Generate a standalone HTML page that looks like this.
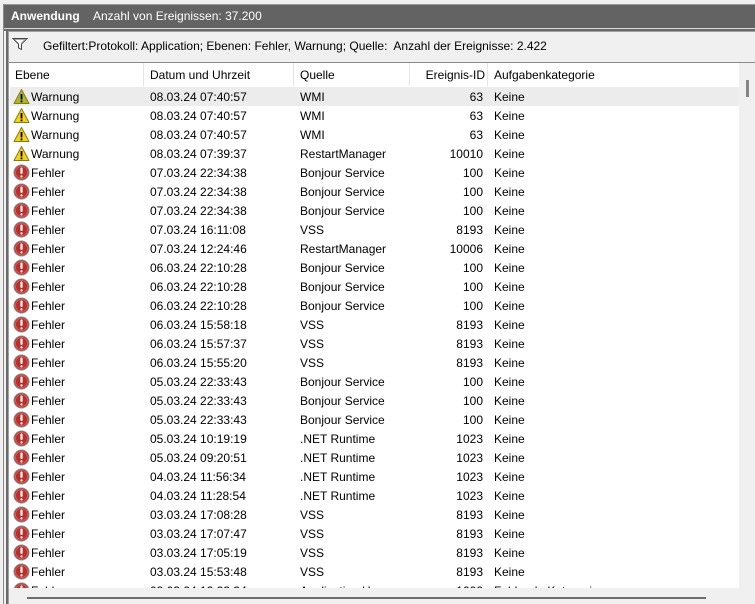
<!DOCTYPE html>
<html><head><meta charset="utf-8"><style>
*{margin:0;padding:0;box-sizing:border-box}
body{width:755px;height:604px;overflow:hidden;background:#f0f0f0;font-family:"Liberation Sans",sans-serif;font-size:12px;color:#000;position:relative}
.abs{position:absolute}
.row{position:absolute;left:10px;width:729px;height:19px;line-height:19px;white-space:nowrap}
.row span{position:absolute;top:1px}
.c1{left:21px}.c2{left:140px}.c3{left:290px}.c4{left:400px;width:73px;text-align:right}.c5{left:484px}
.ic{position:absolute;left:3px;top:1px;width:17px;height:17px}
</style></head><body>
<div class="abs" style="left:3px;top:4px;width:752px;height:1px;background:#9a9a9a"></div>
<div class="abs" style="left:3px;top:4px;width:1px;height:600px;background:#8a8a8a"></div>
<div class="abs" style="left:4px;top:5px;width:751px;height:23px;background:#636363"></div>
<div class="abs" style="left:11px;top:9px;color:#fff;font-weight:bold;font-size:12px">Anwendung</div>
<div class="abs" style="left:93px;top:9px;color:#fff;font-size:12px">Anzahl von Ereignissen: 37.200</div>
<div class="abs" style="left:4px;top:28px;width:751px;height:1px;background:#d8d8d8"></div>
<div class="abs" style="left:4px;top:29px;width:751px;height:2px;background:#6a6a6a"></div>
<div class="abs" style="left:6px;top:29px;width:2px;height:575px;background:#6a6a6a"></div>
<div class="abs" style="left:8px;top:31px;width:747px;height:1px;background:#a0a0a0"></div>
<div class="abs" style="left:8px;top:31px;width:1px;height:573px;background:#a0a0a0"></div>
<svg class="abs" style="left:12px;top:37px" width="16" height="14" viewBox="0 0 16 14"><path d="M1 1.5H15L9.5 7V12.5L6.5 11V7Z" fill="#fff" stroke="#444" stroke-width="1"/><path d="M3 2.5H13L9 6.5" fill="none" stroke="#aaa"/></svg>
<div class="abs" style="left:43px;top:39px;font-size:12px">Gefiltert:Protokoll: Application; Ebenen: Fehler, Warnung; Quelle:&nbsp; Anzahl der Ereignisse: 2.422</div>
<div class="abs" style="left:9px;top:62px;width:746px;height:1px;background:#8a8a8a"></div>
<div class="abs" style="left:9px;top:63px;width:730px;height:525px;background:#fff"></div>
<div class="abs" style="left:739px;top:63px;width:16px;height:525px;background:#f0f0f0"></div>
<div class="abs" style="left:746px;top:80px;width:3px;height:17px;background:#858585"></div>
<div class="abs" style="left:143px;top:63px;width:1px;height:23px;background:#e5e5e5"></div>
<div class="abs" style="left:293px;top:63px;width:1px;height:23px;background:#e5e5e5"></div>
<div class="abs" style="left:409px;top:63px;width:1px;height:23px;background:#e5e5e5"></div>
<div class="abs" style="left:487px;top:63px;width:1px;height:23px;background:#e5e5e5"></div>
<div class="row" style="top:65px"><span style="left:5px">Ebene</span><span class="c2">Datum und Uhrzeit</span><span class="c3">Quelle</span><span class="c4" style="left:402px">Ereignis-ID</span><span class="c5">Aufgabenkategorie</span></div>
<div id="rows" class="abs" style="left:0;top:0;width:755px;height:588px;overflow:hidden"></div>
<div class="abs" style="left:27px;top:597px;width:679px;height:2px;background:#6e6e6e"></div>
<script>
var W='<svg class="ic" viewBox="0 0 17 17"><path d="M8.5 1.5L16 15.5H1Z" fill="#f2d21a" stroke="#8a7a10" stroke-width="1" stroke-linejoin="round"/><rect x="7.6" y="6" width="1.8" height="5.5" fill="#000"/><rect x="7.6" y="12.5" width="1.8" height="1.8" fill="#000"/></svg>';
var W1=W.replace('#f2d21a','#a8b830');
var E='<svg class="ic" viewBox="0 0 17 17"><circle cx="8.5" cy="8.5" r="7.5" fill="#b8302c" stroke="#8a8a8a"/><circle cx="8.5" cy="8.5" r="6" fill="none" stroke="#d86a64" stroke-width="0.8"/><rect x="7.4" y="3.5" width="2.2" height="6.5" rx="1" fill="#fff"/><rect x="7.4" y="11.3" width="2.2" height="2.2" rx="1" fill="#fff"/></svg>';
var d=[["W","08.03.24 07:40:57","WMI","63"],["W","08.03.24 07:40:57","WMI","63"],["W","08.03.24 07:40:57","WMI","63"],["W","08.03.24 07:39:37","RestartManager","10010"],
["E","07.03.24 22:34:38","Bonjour Service","100"],["E","07.03.24 22:34:38","Bonjour Service","100"],["E","07.03.24 22:34:38","Bonjour Service","100"],["E","07.03.24 16:11:08","VSS","8193"],["E","07.03.24 12:24:46","RestartManager","10006"],
["E","06.03.24 22:10:28","Bonjour Service","100"],["E","06.03.24 22:10:28","Bonjour Service","100"],["E","06.03.24 22:10:28","Bonjour Service","100"],["E","06.03.24 15:58:18","VSS","8193"],["E","06.03.24 15:57:37","VSS","8193"],["E","06.03.24 15:55:20","VSS","8193"],
["E","05.03.24 22:33:43","Bonjour Service","100"],["E","05.03.24 22:33:43","Bonjour Service","100"],["E","05.03.24 22:33:43","Bonjour Service","100"],["E","05.03.24 10:19:19",".NET Runtime","1023"],["E","05.03.24 09:20:51",".NET Runtime","1023"],
["E","04.03.24 11:56:34",".NET Runtime","1023"],["E","04.03.24 11:28:54",".NET Runtime","1023"],["E","03.03.24 17:08:28","VSS","8193"],["E","03.03.24 17:07:47","VSS","8193"],["E","03.03.24 17:05:19","VSS","8193"],["E","03.03.24 15:53:48","VSS","8193"],["E","03.03.24 13:33:34","Application Hang","1002","Fehlende Kategorie"]];
var h='';
d.forEach(function(r,i){var top=87+i*19;
h+='<div class="row" style="top:'+top+'px;'+(i==0?'background:#ececec;':'')+'">'+(r[0]=="W"?(i==0?W1:W):E)+'<span class="c1">'+(r[0]=="W"?"Warnung":"Fehler")+'</span><span class="c2">'+r[1]+'</span><span class="c3">'+r[2]+'</span><span class="c4">'+r[3]+'</span><span class="c5">'+(r[4]||"Keine")+'</span></div>';});
document.getElementById('rows').innerHTML=h;
</script>
</body></html>
